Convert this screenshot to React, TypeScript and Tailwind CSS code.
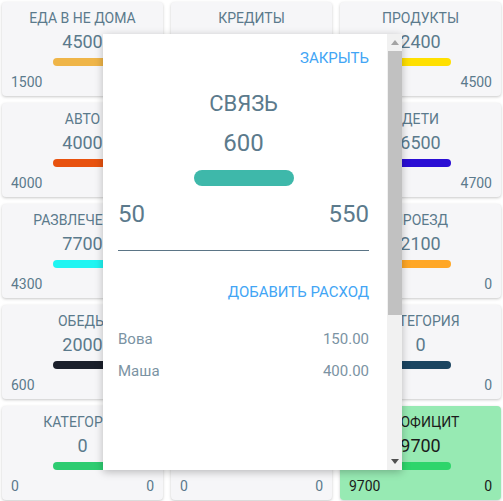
import React from "react";

type Card = {
  title: string;
  value: string;
  bar: string;
  left: string;
  right: string;
  green?: boolean;
};

const cards: Card[] = [
  { title: "ЕДА В НЕ ДОМА", value: "4500", bar: "#efb548", left: "1500", right: "" },
  { title: "КРЕДИТЫ", value: "3000", bar: "#e91e63", left: "0", right: "0" },
  { title: "ПРОДУКТЫ", value: "2400", bar: "#ffe000", left: "", right: "4500" },
  { title: "АВТО", value: "4000", bar: "#e8520f", left: "4000", right: "" },
  { title: "СВЯЗЬ", value: "600", bar: "#3eb8aa", left: "50", right: "550" },
  { title: "ДЕТИ", value: "6500", bar: "#2a0ed4", left: "", right: "4700" },
  { title: "РАЗВЛЕЧЕНИЯ", value: "7700", bar: "#1ff5f2", left: "4300", right: "" },
  { title: "ОДЕЖДА", value: "1500", bar: "#9c27b0", left: "0", right: "0" },
  { title: "ПРОЕЗД", value: "2100", bar: "#ffa726", left: "", right: "0" },
  { title: "ОБЕДЫ", value: "2000", bar: "#1a1f2b", left: "600", right: "" },
  { title: "ЗДОРОВЬЕ", value: "1000", bar: "#8bc34a", left: "0", right: "0" },
  { title: "КАТЕГОРИЯ", value: "0", bar: "#1b4561", left: "", right: "0" },
  { title: "КАТЕГОРИЯ", value: "0", bar: "#2ecc71", left: "0", right: "0" },
  { title: "КАТЕГОРИЯ", value: "0", bar: "#e6e6e6", left: "0", right: "0" },
  { title: "ПРОФИЦИТ", value: "9700", bar: "#2ed56b", left: "9700", right: "0", green: true },
];

function CardView({ c }: { c: Card }) {
  const text = c.green ? "text-[#1b1b1b]" : "text-[#5b7a8c]";
  return (
    <div
      className={`h-[94px] rounded-[4px] flex flex-col items-center shadow-[0_1px_3px_rgba(0,0,0,0.22)] ${
        c.green ? "bg-[#97eab3]" : "bg-[#f6f6f8]"
      }`}
    >
      <div className={`pt-[7px] text-[14px] leading-[18px] ${text}`}>{c.title}</div>
      <div className={`mt-[3px] text-[18px] leading-[24px] ${text}`}>{c.value}</div>
      <div className="mt-[4px] h-[8px] w-[60px] rounded-full" style={{ background: c.bar }} />
      <div className={`mt-[7px] w-full px-[9px] flex justify-between text-[14px] leading-[18px] ${text}`}>
        <span>{c.left}</span>
        <span>{c.right}</span>
      </div>
    </div>
  );
}

export default function App() {
  return (
    <div
      className="relative w-[503px] h-[501px] bg-white overflow-hidden"
      style={{ fontFamily: "Roboto, 'Noto Sans', sans-serif" }}
    >
      <div className="pl-[2px] pt-[2px] grid grid-cols-[161px_161px_161px] gap-x-[8px] gap-y-[7px]">
        {cards.map((c, i) => (
          <CardView key={i} c={c} />
        ))}
      </div>

      <div className="absolute left-[103px] top-[34px] w-[299px] h-[436px] bg-white shadow-[0_2px_8px_rgba(0,0,0,0.25)] flex">
        <div className="flex-1 pl-[15px] pr-[18px] pt-[14px] flex flex-col">
          <div className="text-right text-[15px] leading-[20px] text-[#42a5f5]">ЗАКРЫТЬ</div>
          <div className="mt-[22px] text-center text-[22px] leading-[28px] text-[#5b7a8c]">СВЯЗЬ</div>
          <div className="mt-[10px] text-center text-[24px] leading-[30px] text-[#5b7a8c]">600</div>
          <div className="mt-[12px] self-center h-[16px] w-[100px] rounded-full bg-[#3eb8aa]" />
          <div className="mt-[13px] flex justify-between text-[24px] leading-[30px] text-[#5b7a8c]">
            <span>50</span>
            <span>550</span>
          </div>
          <div className="mt-[21px] h-px bg-[#5b7586]" />
          <div className="mt-[31px] text-right text-[15px] leading-[20px] text-[#42a5f5]">ДОБАВИТЬ РАСХОД</div>
          <div className="mt-[21px] flex justify-between h-[32px] items-center text-[15px] text-[#7b93a3]">
            <span>Вова</span>
            <span>150.00</span>
          </div>
          <div className="flex justify-between h-[32px] items-center text-[15px] text-[#7b93a3]">
            <span>Маша</span>
            <span>400.00</span>
          </div>
        </div>
        <div className="w-[15px] h-full bg-[#f1f1f1] flex flex-col items-center">
          <div className="h-[17px] w-full flex items-center justify-center">
            <svg width="8" height="5" viewBox="0 0 8 5">
              <polygon points="4,0 8,5 0,5" fill="#a3a3a3" />
            </svg>
          </div>
          <div className="w-[14px] h-[264px] bg-[#c1c1c1]" />
          <div className="flex-1" />
          <div className="h-[17px] w-full flex items-center justify-center">
            <svg width="8" height="5" viewBox="0 0 8 5">
              <polygon points="0,0 8,0 4,5" fill="#505050" />
            </svg>
          </div>
        </div>
      </div>
    </div>
  );
}
